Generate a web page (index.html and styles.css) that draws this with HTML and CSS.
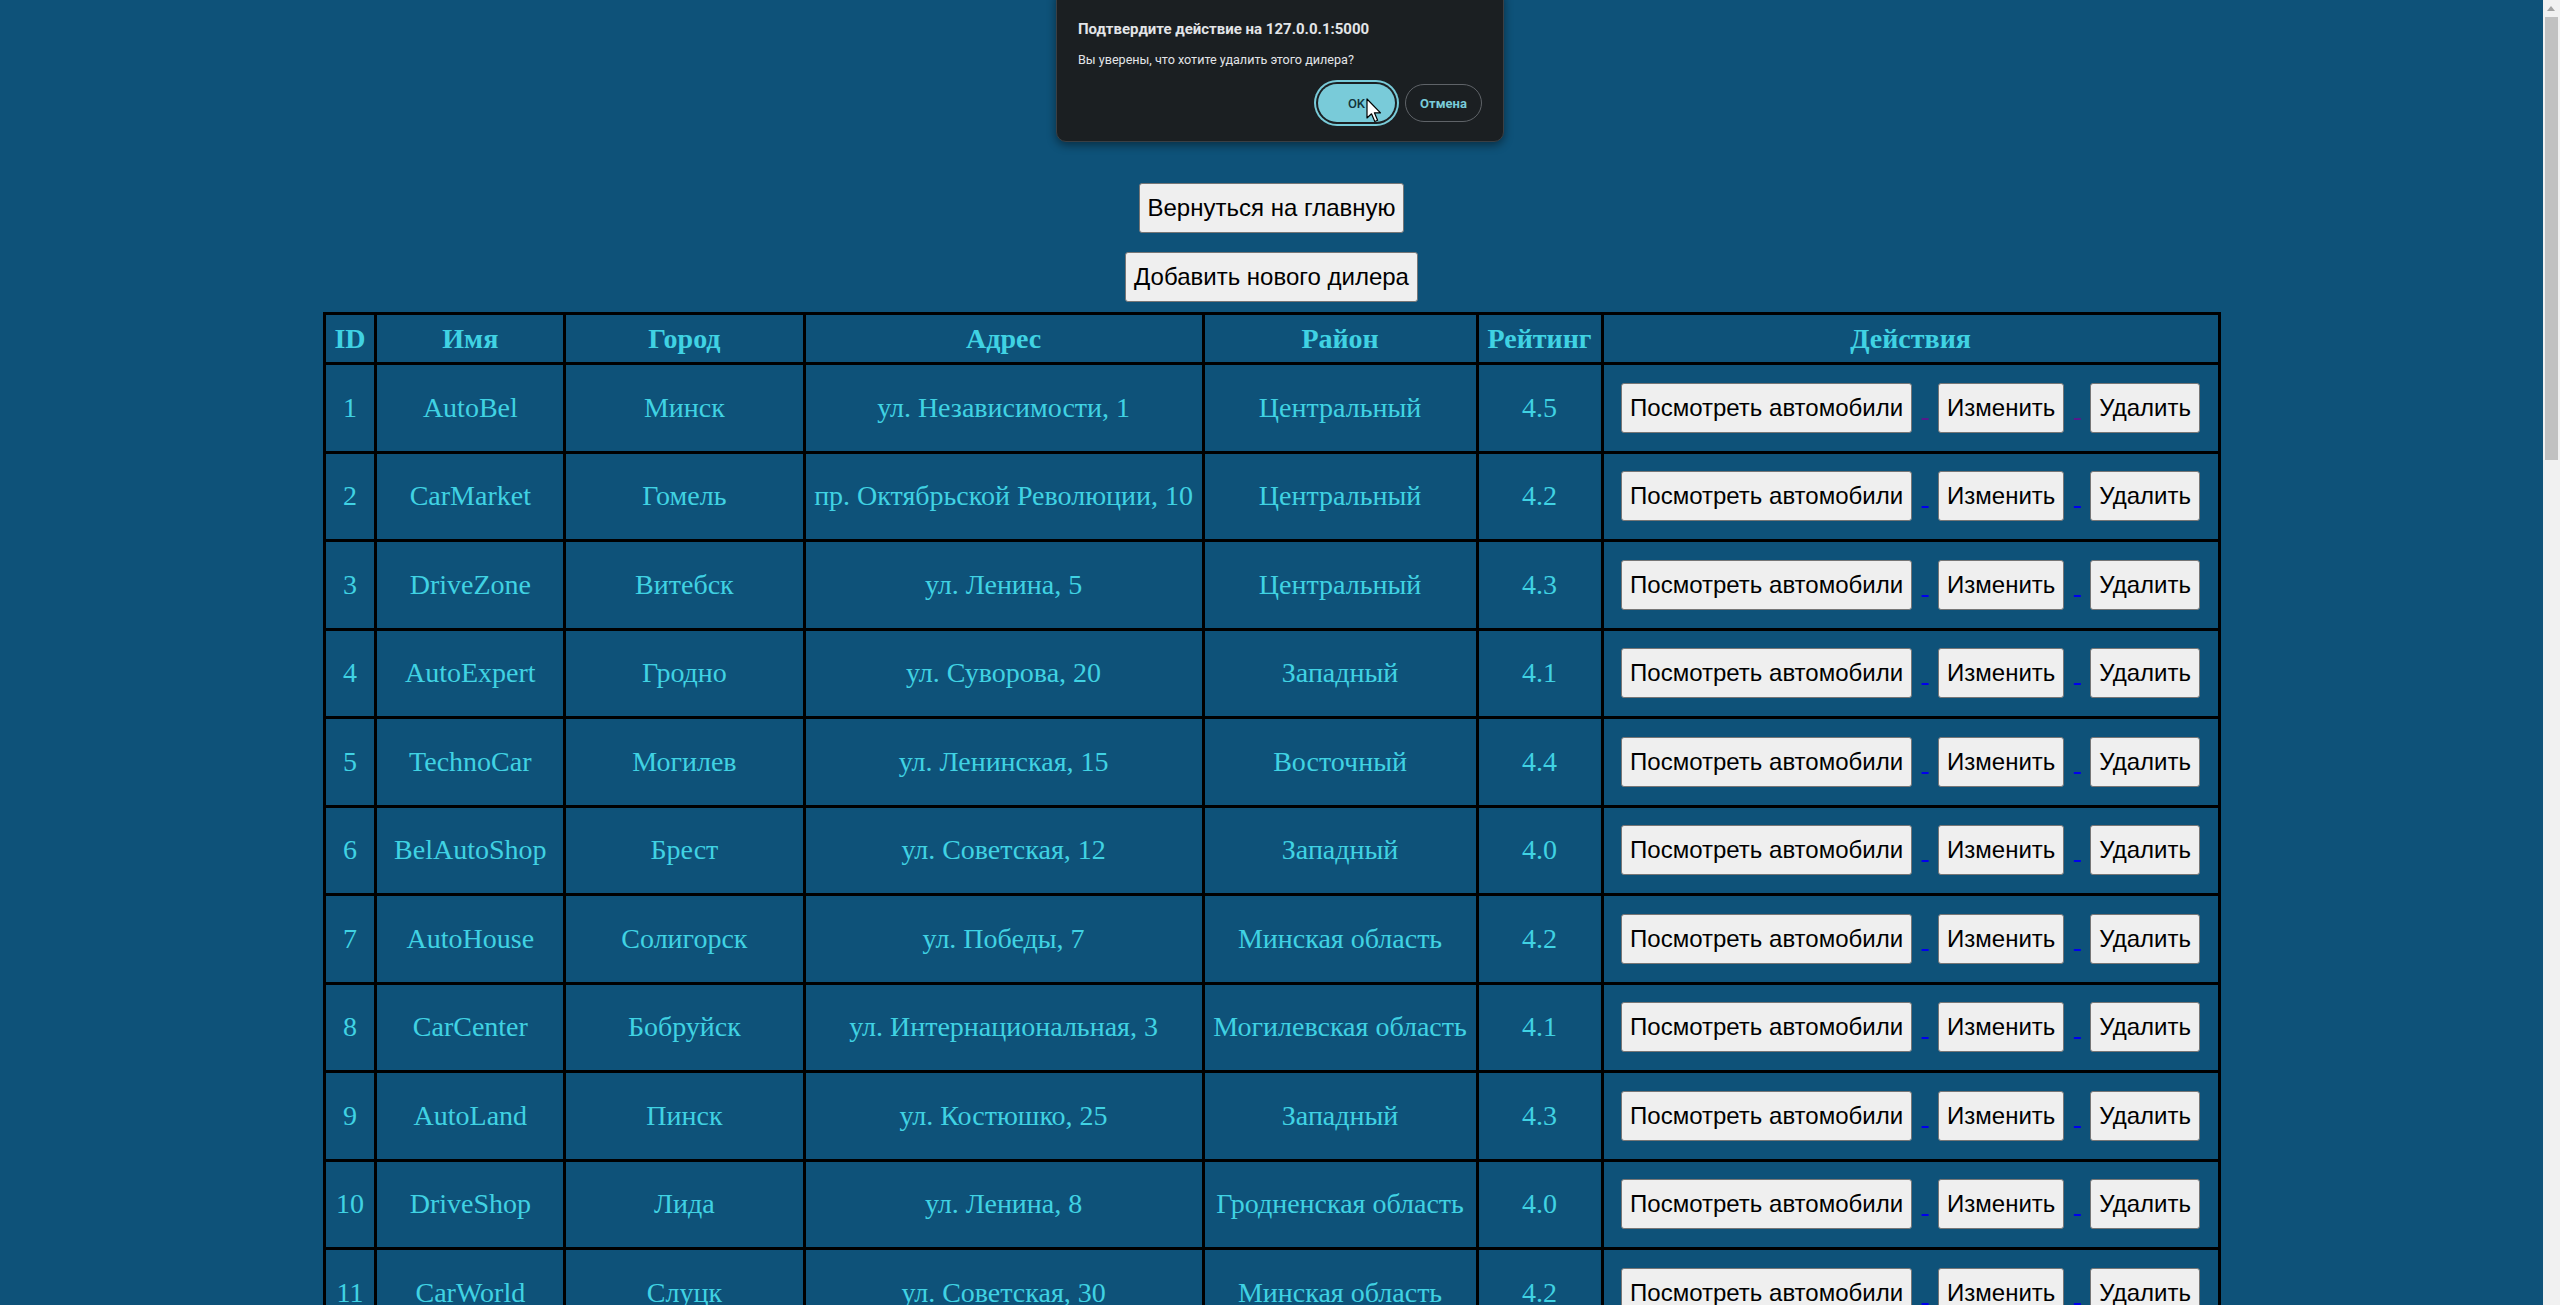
FILE: index.html
```html
<!DOCTYPE html>
<html lang="ru">
<head>
<meta charset="utf-8">
<title>Дилеры</title>
<link rel="stylesheet" href="styles.css">
</head>
<body>
<div class="top-actions">
  <a href="#"><button class="btn">Вернуться на главную</button></a>
  <a href="#"><button class="btn">Добавить нового дилера</button></a>
</div>
<table class="dealers">
  <thead>
    <tr><th class="c-id">ID</th><th class="c-name">Имя</th><th class="c-city">Город</th><th class="c-addr">Адрес</th><th class="c-dist">Район</th><th class="c-rate">Рейтинг</th><th>Действия</th></tr>
  </thead>
  <tbody>
    <tr class="visited"><td>1</td><td>AutoBel</td><td>Минск</td><td>ул. Независимости, 1</td><td>Центральный</td><td>4.5</td><td class="actions"><a href="#"><button class="btn">Посмотреть автомобили</button> </a><a href="#"><button class="btn">Изменить</button> </a><button class="btn">Удалить</button></td></tr>
    <tr><td>2</td><td>CarMarket</td><td>Гомель</td><td>пр. Октябрьской Революции, 10</td><td>Центральный</td><td>4.2</td><td class="actions"><a href="#"><button class="btn">Посмотреть автомобили</button> </a><a href="#"><button class="btn">Изменить</button> </a><button class="btn">Удалить</button></td></tr>
    <tr><td>3</td><td>DriveZone</td><td>Витебск</td><td>ул. Ленина, 5</td><td>Центральный</td><td>4.3</td><td class="actions"><a href="#"><button class="btn">Посмотреть автомобили</button> </a><a href="#"><button class="btn">Изменить</button> </a><button class="btn">Удалить</button></td></tr>
    <tr><td>4</td><td>AutoExpert</td><td>Гродно</td><td>ул. Суворова, 20</td><td>Западный</td><td>4.1</td><td class="actions"><a href="#"><button class="btn">Посмотреть автомобили</button> </a><a href="#"><button class="btn">Изменить</button> </a><button class="btn">Удалить</button></td></tr>
    <tr><td>5</td><td>TechnoCar</td><td>Могилев</td><td>ул. Ленинская, 15</td><td>Восточный</td><td>4.4</td><td class="actions"><a href="#"><button class="btn">Посмотреть автомобили</button> </a><a href="#"><button class="btn">Изменить</button> </a><button class="btn">Удалить</button></td></tr>
    <tr><td>6</td><td>BelAutoShop</td><td>Брест</td><td>ул. Советская, 12</td><td>Западный</td><td>4.0</td><td class="actions"><a href="#"><button class="btn">Посмотреть автомобили</button> </a><a href="#"><button class="btn">Изменить</button> </a><button class="btn">Удалить</button></td></tr>
    <tr><td>7</td><td>AutoHouse</td><td>Солигорск</td><td>ул. Победы, 7</td><td>Минская область</td><td>4.2</td><td class="actions"><a href="#"><button class="btn">Посмотреть автомобили</button> </a><a href="#"><button class="btn">Изменить</button> </a><button class="btn">Удалить</button></td></tr>
    <tr><td>8</td><td>CarCenter</td><td>Бобруйск</td><td>ул. Интернациональная, 3</td><td>Могилевская область</td><td>4.1</td><td class="actions"><a href="#"><button class="btn">Посмотреть автомобили</button> </a><a href="#"><button class="btn">Изменить</button> </a><button class="btn">Удалить</button></td></tr>
    <tr><td>9</td><td>AutoLand</td><td>Пинск</td><td>ул. Костюшко, 25</td><td>Западный</td><td>4.3</td><td class="actions"><a href="#"><button class="btn">Посмотреть автомобили</button> </a><a href="#"><button class="btn">Изменить</button> </a><button class="btn">Удалить</button></td></tr>
    <tr><td>10</td><td>DriveShop</td><td>Лида</td><td>ул. Ленина, 8</td><td>Гродненская область</td><td>4.0</td><td class="actions"><a href="#"><button class="btn">Посмотреть автомобили</button> </a><a href="#"><button class="btn">Изменить</button> </a><button class="btn">Удалить</button></td></tr>
    <tr><td>11</td><td>CarWorld</td><td>Слуцк</td><td>ул. Советская, 30</td><td>Минская область</td><td>4.2</td><td class="actions"><a href="#"><button class="btn">Посмотреть автомобили</button> </a><a href="#"><button class="btn">Изменить</button> </a><button class="btn">Удалить</button></td></tr>
  </tbody>
</table>

<div class="scrollbar" aria-hidden="true">
  <div class="scroll-arrow"></div>
  <div class="scroll-thumb"></div>
</div>

<div class="dialog" role="dialog">
  <div class="dialog-title">Подтвердите действие на 127.0.0.1:5000</div>
  <div class="dialog-msg">Вы уверены, что хотите удалить этого дилера?</div>
  <div class="dialog-buttons">
    <button class="dlg-btn dlg-ok">OK</button>
    <button class="dlg-btn dlg-cancel">Отмена</button>
  </div>
</div>
<svg class="cursor" width="16" height="26" viewBox="0 0 16 26"><path d="M1 1 L1 20 L5.5 15.8 L8.8 23.5 L11.6 22.3 L8.4 14.8 L14.5 14.8 Z" fill="#fff" stroke="#000" stroke-width="1.2" stroke-linejoin="round"/></svg>
</body>
</html>
```
FILE: styles.css
```css
html, body {
  background: #0e5279;
}
body {
  margin: 8px 25px 8px 8px;
  font-family: "Liberation Serif", "Times New Roman", serif;
  color: #40d2e3;
}
.top-actions {
  display: flex;
  flex-direction: column;
  align-items: center;
  gap: 19px;
  padding-top: 175px;
}
.btn {
  font-family: "Liberation Sans", Arial, sans-serif;
  font-size: 24px;
  color: #000;
  background: #efefef;
  border: 1px solid #767676;
  border-radius: 3px;
  padding: 10px 8px;
  cursor: pointer;
}
.dealers {
  width: 1898px;
  margin: 10px auto 0;
  border-collapse: collapse;
  border: 3px solid #000;
  font-size: 28px;
}
.dealers th, .dealers td {
  border: 3px solid #000;
  padding: 8px 8px;
  text-align: center;
  color: #40d2e3;
  white-space: nowrap;
}
.dealers th {
  font-weight: bold;
  padding-top: 7.5px;
  padding-bottom: 7.5px;
}
.c-id { width: 33px; }
.c-name { width: 170px; }
.c-city { width: 222px; }
.c-addr { width: 380px; }
.c-dist { width: 255px; }
.c-rate { width: 106px; }
.actions .btn {
  margin: 9.75px 9.5px;
}
.actions a {
  color: #0000ee;
}
.visited .actions a {
  color: #551a8b;
}

/* browser scrollbar */
.scrollbar {
  position: fixed;
  top: 0;
  right: 0;
  width: 17px;
  height: 100%;
  background: #f1f1f1;
}
.scroll-arrow {
  position: absolute;
  top: 6px;
  left: 4px;
  width: 0;
  height: 0;
  border-left: 4.5px solid transparent;
  border-right: 4.5px solid transparent;
  border-bottom: 5px solid #a3a3a3;
}
.scroll-thumb {
  position: absolute;
  top: 17px;
  left: 2px;
  width: 13px;
  height: 443px;
  background: #c1c1c1;
}

/* native confirm dialog */
.dialog {
  position: absolute;
  top: -12px;
  left: 1056px;
  width: 448px;
  box-sizing: border-box;
  padding: 30px 21px 19px;
  background: #1b1f22;
  border: 1px solid #3a3f44;
  border-radius: 10px;
  box-shadow: 0 3px 10px rgba(0, 0, 0, 0.45);
  font-family: Roboto, "Noto Sans", sans-serif;
  color: #e3e5e8;
}
.dialog-title {
  font-size: 15px;
  font-weight: bold;
  line-height: 20px;
}
.dialog-msg {
  font-size: 12.6px;
  line-height: 18px;
  margin-top: 11.5px;
}
.dialog-buttons {
  display: flex;
  justify-content: flex-end;
  gap: 10px;
  margin-top: 15.5px;
}
.dlg-btn {
  height: 38px;
  width: 77px;
  border-radius: 19px;
  font-family: Roboto, "Noto Sans", sans-serif;
  font-size: 13px;
  font-weight: 500;
  padding: 0;
}
.dlg-ok {
  background: #79cbd9;
  border: none;
  color: #12343a;
  box-shadow: 0 0 0 2px #1b1f22, 0 0 0 4px #79cbd9;
}
.dlg-cancel {
  background: transparent;
  border: 1px solid #5f6368;
  color: #79cbd9;
  font-weight: bold;
}
.cursor {
  position: absolute;
  left: 1366px;
  top: 98px;
}
```
